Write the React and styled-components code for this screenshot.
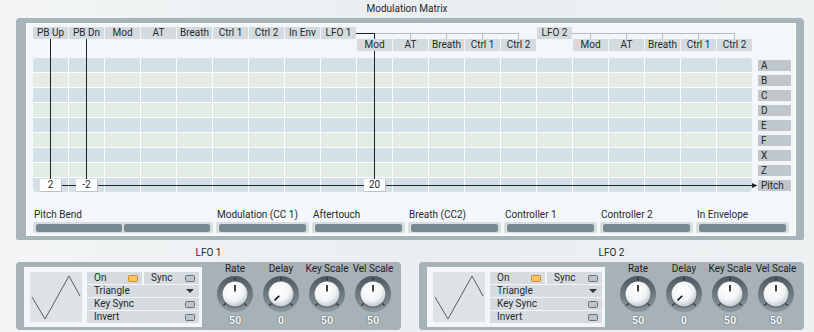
import React from 'react'
import styled, { createGlobalStyle } from 'styled-components'

// matrix geometry, page coordinates
const COL0 = 33
const PITCH = 36
const cx = i => COL0 + i * PITCH + 17.5
const tabRight = i => COL0 + i * PITCH + 35

const ROW1 = ['PB Up', 'PB Dn', 'Mod', 'AT', 'Breath', 'Ctrl 1', 'Ctrl 2', 'In Env', 'LFO 1']
const SUBS = ['Mod', 'AT', 'Breath', 'Ctrl 1', 'Ctrl 2']
const TARGETS = ['A', 'B', 'C', 'D', 'E', 'F', 'X', 'Z', 'Pitch']
const SOURCES = ['Modulation (CC 1)', 'Aftertouch', 'Breath (CC2)', 'Controller 1', 'Controller 2', 'In Envelope']

const GlobalStyle = createGlobalStyle`
  body {
    margin: 0;
    background: #eef1f3;
    font-family: Roboto, "Liberation Sans", sans-serif;
    font-size: 10px;
    color: #25292c;
  }
`

const Page = styled.div`
  width: 814px;
  height: 332px;
  overflow: hidden;
  background: linear-gradient(90deg, #f3f5f6, #eaeef0 50%, #eef1f2);
`

const Title = styled.div`
  height: 18px;
  line-height: 18px;
  text-align: center;
`

const Frame = styled.div`
  margin-left: 16px;
  width: 788px;
  height: 222px;
  box-sizing: border-box;
  border-style: solid;
  border-color: #a9b3ba;
  border-width: 5px 8px 4px 10px;
  border-radius: 4px 4px 2px 2px;
`

const Inner = styled.div`
  position: relative;
  height: 213px;
  box-sizing: border-box;
  padding: 4px 5px 3px 7px;
  background: #f4f7f9;
  box-shadow: inset 0 0 0 1px #fbfcfd;
`

const Header = styled.div`
  display: grid;
  grid-template-columns: repeat(20, 35px);
  grid-template-rows: 12px 12px;
  column-gap: 1px;
`

const Tab = styled.div`
  grid-column: ${p => p.col + 1};
  grid-row: ${p => p.row};
  background: #d4dbdf;
  border-radius: 1px;
  line-height: 12px;
  text-align: center;
  white-space: nowrap;
`

const MatrixRow = styled.div`
  display: flex;
  gap: 6px;
  margin-top: 7px;
`

const Grid = styled.div`
  display: grid;
  grid-template-columns: repeat(20, 35px);
  grid-auto-rows: 14px;
  gap: 1px;
  background: #fafcfd;
  border-radius: 3px;
  overflow: hidden;
`

const Cell = styled.div`
  background: ${p => (p.alt ? '#e2ece3' : '#d4e0e7')};
`

const Targets = styled.div`
  display: grid;
  grid-auto-rows: 14px;
  row-gap: 1px;
  width: 33px;
`

const Target = styled.div`
  margin-top: 2px;
  height: 11px;
  line-height: 11px;
  padding-left: 3px;
  background: #bfc7cc;
`

const Sources = styled.div`
  display: grid;
  grid-template-columns: 180px repeat(6, 1fr);
  column-gap: 3px;
  width: 756px;
  margin-top: 17px;
`

const SourceLabel = styled.div`
  line-height: 12px;
  padding-left: 1px;
  white-space: nowrap;
`

const Bar = styled.div`
  display: flex;
  gap: 2px;
  margin-top: 1px;
  height: 11px;
  box-sizing: border-box;
  padding: 2px 3px 1px;
  background: #d6dce0;
  border-radius: 2px;
`

const BarFill = styled.div`
  flex: 1;
  background: #778891;
  border-radius: 2px;
`

const Overlay = styled.svg`
  position: absolute;
  left: 0;
  top: 0;
  pointer-events: none;
`

const ValueBox = styled.div`
  position: absolute;
  top: 156px;
  left: ${p => p.x - 26 - 10.5}px;
  width: 21px;
  height: 12px;
  line-height: 12px;
  text-align: center;
  background: #ffffff;
  box-shadow: 1px 1px 0 #b9c1c6;
`

const LfoRow = styled.div`
  display: flex;
  gap: 18px;
  margin: 7px 0 0 16px;
`

const LfoUnit = styled.div`
  width: 385px;
`

const LfoTitle = styled.div`
  height: 12px;
  line-height: 12px;
  text-align: center;
  margin-bottom: 3px;
`

const Panel = styled.div`
  display: flex;
  align-items: flex-start;
  height: 68px;
  box-sizing: border-box;
  padding-left: 8px;
  background: #a7b1b8;
  border-radius: 4px;
`

const WhiteBox = styled.div`
  display: flex;
  gap: 5px;
  width: 178px;
  height: 60px;
  margin-top: 5px;
  box-sizing: border-box;
  padding: 5px 3px 0 6px;
  background: #f4f7f9;
`

const WaveBox = styled.div`
  width: 52px;
  height: 50px;
  background: #dce2e5;
`

const Switches = styled.div`
  display: flex;
  flex-direction: column;
  gap: 1px;
  width: 112px;
`

const SwitchRow = styled.div`
  display: flex;
  gap: 2px;
  height: 12px;
`

const SwitchCell = styled.div`
  flex: 1;
  display: flex;
  align-items: center;
  justify-content: space-between;
  padding: 0 4px 0 7px;
  line-height: 12px;
  background: #d5dbdf;
`

const Led = styled.span`
  width: 10px;
  height: 7px;
  box-sizing: border-box;
  border: 1px solid ${p => (p.on ? '#c88a2c' : '#66727a')};
  background: ${p => (p.on ? '#f8c662' : '#bcc4c9')};
  border-radius: 1.5px;
`

const Arrow = styled.span`
  width: 0;
  height: 0;
  margin-right: 1px;
  border-left: 4px solid transparent;
  border-right: 4px solid transparent;
  border-top: 4px solid #2e3438;
`

const KnobArea = styled.div`
  display: grid;
  grid-template-columns: repeat(4, 46px);
  margin: 1px 0 0 10px;
`

const KnobCol = styled.div`
  display: flex;
  flex-direction: column;
  align-items: center;
`

const KnobLabel = styled.div`
  line-height: 12px;
  white-space: nowrap;
  color: #1f2326;
`

const KnobValue = styled.div`
  margin-top: 2px;
  line-height: 12px;
  font-size: 11px;
  font-weight: bold;
  color: #fbfcfc;
  text-shadow: 0 0 1px #4a555c, 0 0 1px #4a555c;
`

function polar(a, r) {
  const t = (a - 90) * Math.PI / 180
  return [19 + r * Math.cos(t), 19 + r * Math.sin(t)]
}

function Knob({ angle }) {
  const ticks = [-135, 0, 135]
  const [x1, y1] = polar(angle, 2.5)
  const [x2, y2] = polar(angle, 9)
  return (
    <svg width="38" height="38" viewBox="0 0 38 38">
      <defs>
        <linearGradient id="ring" x1="0" y1="0" x2="0" y2="1">
          <stop offset="0" stopColor="#4c575f" />
          <stop offset="1" stopColor="#8e999f" />
        </linearGradient>
        <radialGradient id="cap" cx="0.42" cy="0.35" r="0.7">
          <stop offset="0" stopColor="#ffffff" />
          <stop offset="0.6" stopColor="#f1f4f5" />
          <stop offset="1" stopColor="#b7c0c5" />
        </radialGradient>
      </defs>
      <circle cx="19" cy="19" r="18" fill="url(#ring)" />
      {ticks.map(a => {
        const [ax, ay] = polar(a, 13.5)
        const [bx, by] = polar(a, 16.5)
        return <line key={a} x1={ax} y1={ay} x2={bx} y2={by} stroke="#262d32" strokeWidth="1.2" />
      })}
      <circle cx="19" cy="20" r="13" fill="#3d474e" opacity="0.5" />
      <circle cx="19" cy="19" r="12.5" fill="url(#cap)" />
      <line x1={x1} y1={y1} x2={x2} y2={y2} stroke="#111" strokeWidth="1.6" />
    </svg>
  )
}

function Lfo({ name }) {
  const knobs = [['Rate', 0, '50'], ['Delay', -135, '0'], ['Key Scale', 0, '50'], ['Vel Scale', 0, '50']]
  return (
    <LfoUnit>
      <LfoTitle>{name}</LfoTitle>
      <Panel>
        <WhiteBox>
          <WaveBox>
            <svg width="52" height="50">
              <polyline points="2,25 15,47 39,4 50,24" fill="none" stroke="#555d62" strokeWidth="1" />
            </svg>
          </WaveBox>
          <Switches>
            <SwitchRow>
              <SwitchCell>On<Led on /></SwitchCell>
              <SwitchCell>Sync<Led /></SwitchCell>
            </SwitchRow>
            <SwitchRow><SwitchCell>Triangle<Arrow /></SwitchCell></SwitchRow>
            <SwitchRow><SwitchCell>Key Sync<Led /></SwitchCell></SwitchRow>
            <SwitchRow><SwitchCell>Invert<Led /></SwitchCell></SwitchRow>
          </Switches>
        </WhiteBox>
        <KnobArea>
          {knobs.map(([label, angle, value]) => (
            <KnobCol key={label}>
              <KnobLabel>{label}</KnobLabel>
              <Knob angle={angle} />
              <KnobValue>{value}</KnobValue>
            </KnobCol>
          ))}
        </KnobArea>
      </Panel>
    </LfoUnit>
  )
}

export default function App() {
  const dark = '#1e2326'
  const grey = '#b6bec3'
  return (
    <Page>
      <GlobalStyle />
      <Title>Modulation Matrix</Title>
      <Frame>
        <Inner>
          <Header>
            {ROW1.map((t, i) => <Tab key={t + i} col={i} row={1}>{t}</Tab>)}
            <Tab col={14} row={1}>LFO 2</Tab>
            {SUBS.map((t, i) => <Tab key={'a' + t} col={9 + i} row={2}>{t}</Tab>)}
            {SUBS.map((t, i) => <Tab key={'b' + t} col={15 + i} row={2}>{t}</Tab>)}
          </Header>
          <MatrixRow>
            <Grid>
              {TARGETS.map((t, r) =>
                Array.from({ length: 20 }, (_, c) => <Cell key={t + c} alt={r % 2 === 1} />)
              )}
            </Grid>
            <Targets>
              {TARGETS.map(t => <Target key={t}>{t}</Target>)}
            </Targets>
          </MatrixRow>
          <Sources>
            <div>
              <SourceLabel>Pitch Bend</SourceLabel>
              <Bar><BarFill /><BarFill /></Bar>
            </div>
            {SOURCES.map(s => (
              <div key={s}>
                <SourceLabel>{s}</SourceLabel>
                <Bar><BarFill /></Bar>
              </div>
            ))}
          </Sources>

          <Overlay width="770" height="213">
            <g transform="translate(-26,-23)" shapeRendering="crispEdges">
              <line x1={tabRight(8)} y1="33.5" x2={cx(13)} y2="33.5" stroke={grey} />
              {[9, 10, 11, 12, 13].map(i => (
                <line key={i} x1={cx(i)} y1="33.5" x2={cx(i)} y2="39" stroke={grey} />
              ))}
              <line x1={tabRight(14)} y1="33.5" x2={cx(19)} y2="33.5" stroke={grey} />
              {[15, 16, 17, 18, 19].map(i => (
                <line key={i} x1={cx(i)} y1="33.5" x2={cx(i)} y2="39" stroke={grey} />
              ))}
              <line x1={tabRight(8)} y1="33.5" x2={cx(9) + 0.5} y2="33.5" stroke={dark} />
              <line x1={cx(9)} y1="33.5" x2={cx(9)} y2="39" stroke={dark} />
              <line x1={cx(9)} y1="51" x2={cx(9)} y2="179" stroke={dark} />
              <line x1={cx(0)} y1="39" x2={cx(0)} y2="179" stroke={dark} />
              <line x1={cx(1)} y1="39" x2={cx(1)} y2="179" stroke={dark} />
              <line x1="50" y1="185.5" x2="753" y2="185.5" stroke={dark} />
            </g>
            <g transform="translate(-26,-23)">
              <polygon points="752,183 757.5,185.5 752,188" fill={dark} />
            </g>
          </Overlay>
          <ValueBox x={cx(0)}>2</ValueBox>
          <ValueBox x={cx(1)}>-2</ValueBox>
          <ValueBox x={cx(9)}>20</ValueBox>
        </Inner>
      </Frame>
      <LfoRow>
        <Lfo name="LFO 1" />
        <Lfo name="LFO 2" />
      </LfoRow>
    </Page>
  )
}
